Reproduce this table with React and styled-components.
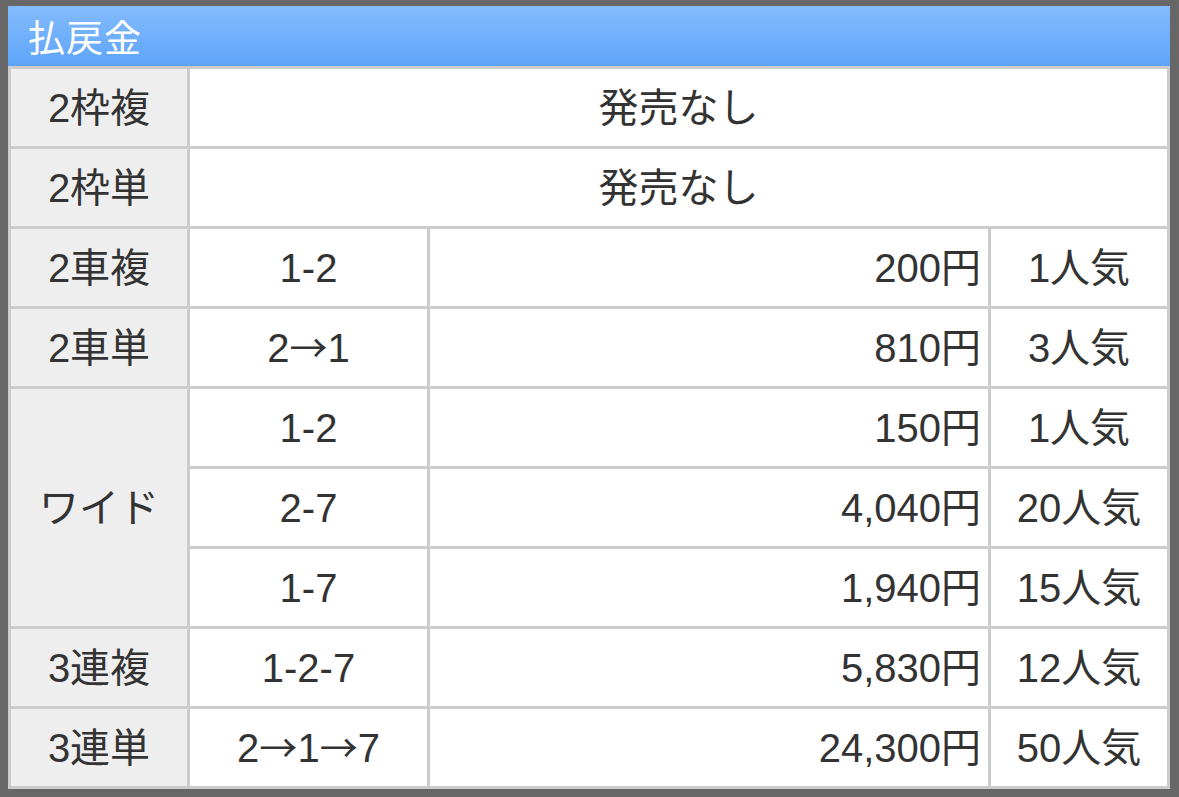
import React from "react";
import styled, { createGlobalStyle } from "styled-components";

const Global = createGlobalStyle`
  html, body { margin: 0; padding: 0; background: #676767; }
  body { font-family: "Liberation Sans", "Noto Sans CJK JP", sans-serif; }
`;

const Frame = styled.div`
  width: 1179px;
  height: 797px;
  box-sizing: border-box;
  padding: 6px 9px 8px 8px;
  background: #676767;
  display: flex;
  flex-direction: column;
`;

const Header = styled.div`
  height: 60px;
  flex: none;
  display: flex;
  align-items: center;
  padding-left: 20px;
  box-sizing: border-box;
  background: linear-gradient(to bottom, #84bbfd 0%, #70b0fb 50%, #5ea4f8 100%);
  color: #fff;
  font-family: "Noto Sans CJK JP", sans-serif;
  font-size: 37px;
  letter-spacing: 1px;
`;

const Table = styled.table`
  width: 1162px;
  border-collapse: separate;
  border-spacing: 3px;
  background: #cccccc;
  table-layout: fixed;
  color: #333;
  font-size: 40px;
`;

const Cell = styled.td`
  height: 77px;
  padding: 0 ${(p) => (p.$align === "right" ? "7px" : "0")} 0 0;
  box-sizing: border-box;
  background: ${(p) => (p.$head ? "#eeeeee" : "#ffffff")};
  text-align: ${(p) => p.$align || "center"};
  vertical-align: middle;
  white-space: nowrap;
  line-height: 1;
`;

const Arrow = styled.span`
  font-family: "Noto Sans CJK JP", sans-serif;
  font-size: 38px;
`;

const withArrows = (s) =>
  s.split("→").flatMap((part, i) =>
    i === 0 ? [part] : [<Arrow key={i}>→</Arrow>, part]
  );

const rows = [
  { k: "2枠複", none: true },
  { k: "2枠単", none: true },
  { k: "2車複", c: "1-2", y: "200円", n: "1人気" },
  { k: "2車単", c: "2→1", y: "810円", n: "3人気" },
  { k: "ワイド", c: "1-2", y: "150円", n: "1人気", span: 3 },
  { c: "2-7", y: "4,040円", n: "20人気" },
  { c: "1-7", y: "1,940円", n: "15人気" },
  { k: "3連複", c: "1-2-7", y: "5,830円", n: "12人気" },
  { k: "3連単", c: "2→1→7", y: "24,300円", n: "50人気" },
];

export default function App() {
  return (
    <>
      <Global />
      <Frame>
        <Header>払戻金</Header>
        <Table>
          <colgroup>
            <col style={{ width: 176 }} />
            <col style={{ width: 237 }} />
            <col style={{ width: 558 }} />
            <col style={{ width: 176 }} />
          </colgroup>
          <tbody>
            {rows.map((r, i) => (
              <tr key={i}>
                {r.k && (
                  <Cell $head rowSpan={r.span || 1}>
                    {r.k}
                  </Cell>
                )}
                {r.none ? (
                  <Cell colSpan={3}>発売なし</Cell>
                ) : (
                  <>
                    <Cell>{withArrows(r.c)}</Cell>
                    <Cell $align="right">{r.y}</Cell>
                    <Cell>{r.n}</Cell>
                  </>
                )}
              </tr>
            ))}
          </tbody>
        </Table>
      </Frame>
    </>
  );
}
